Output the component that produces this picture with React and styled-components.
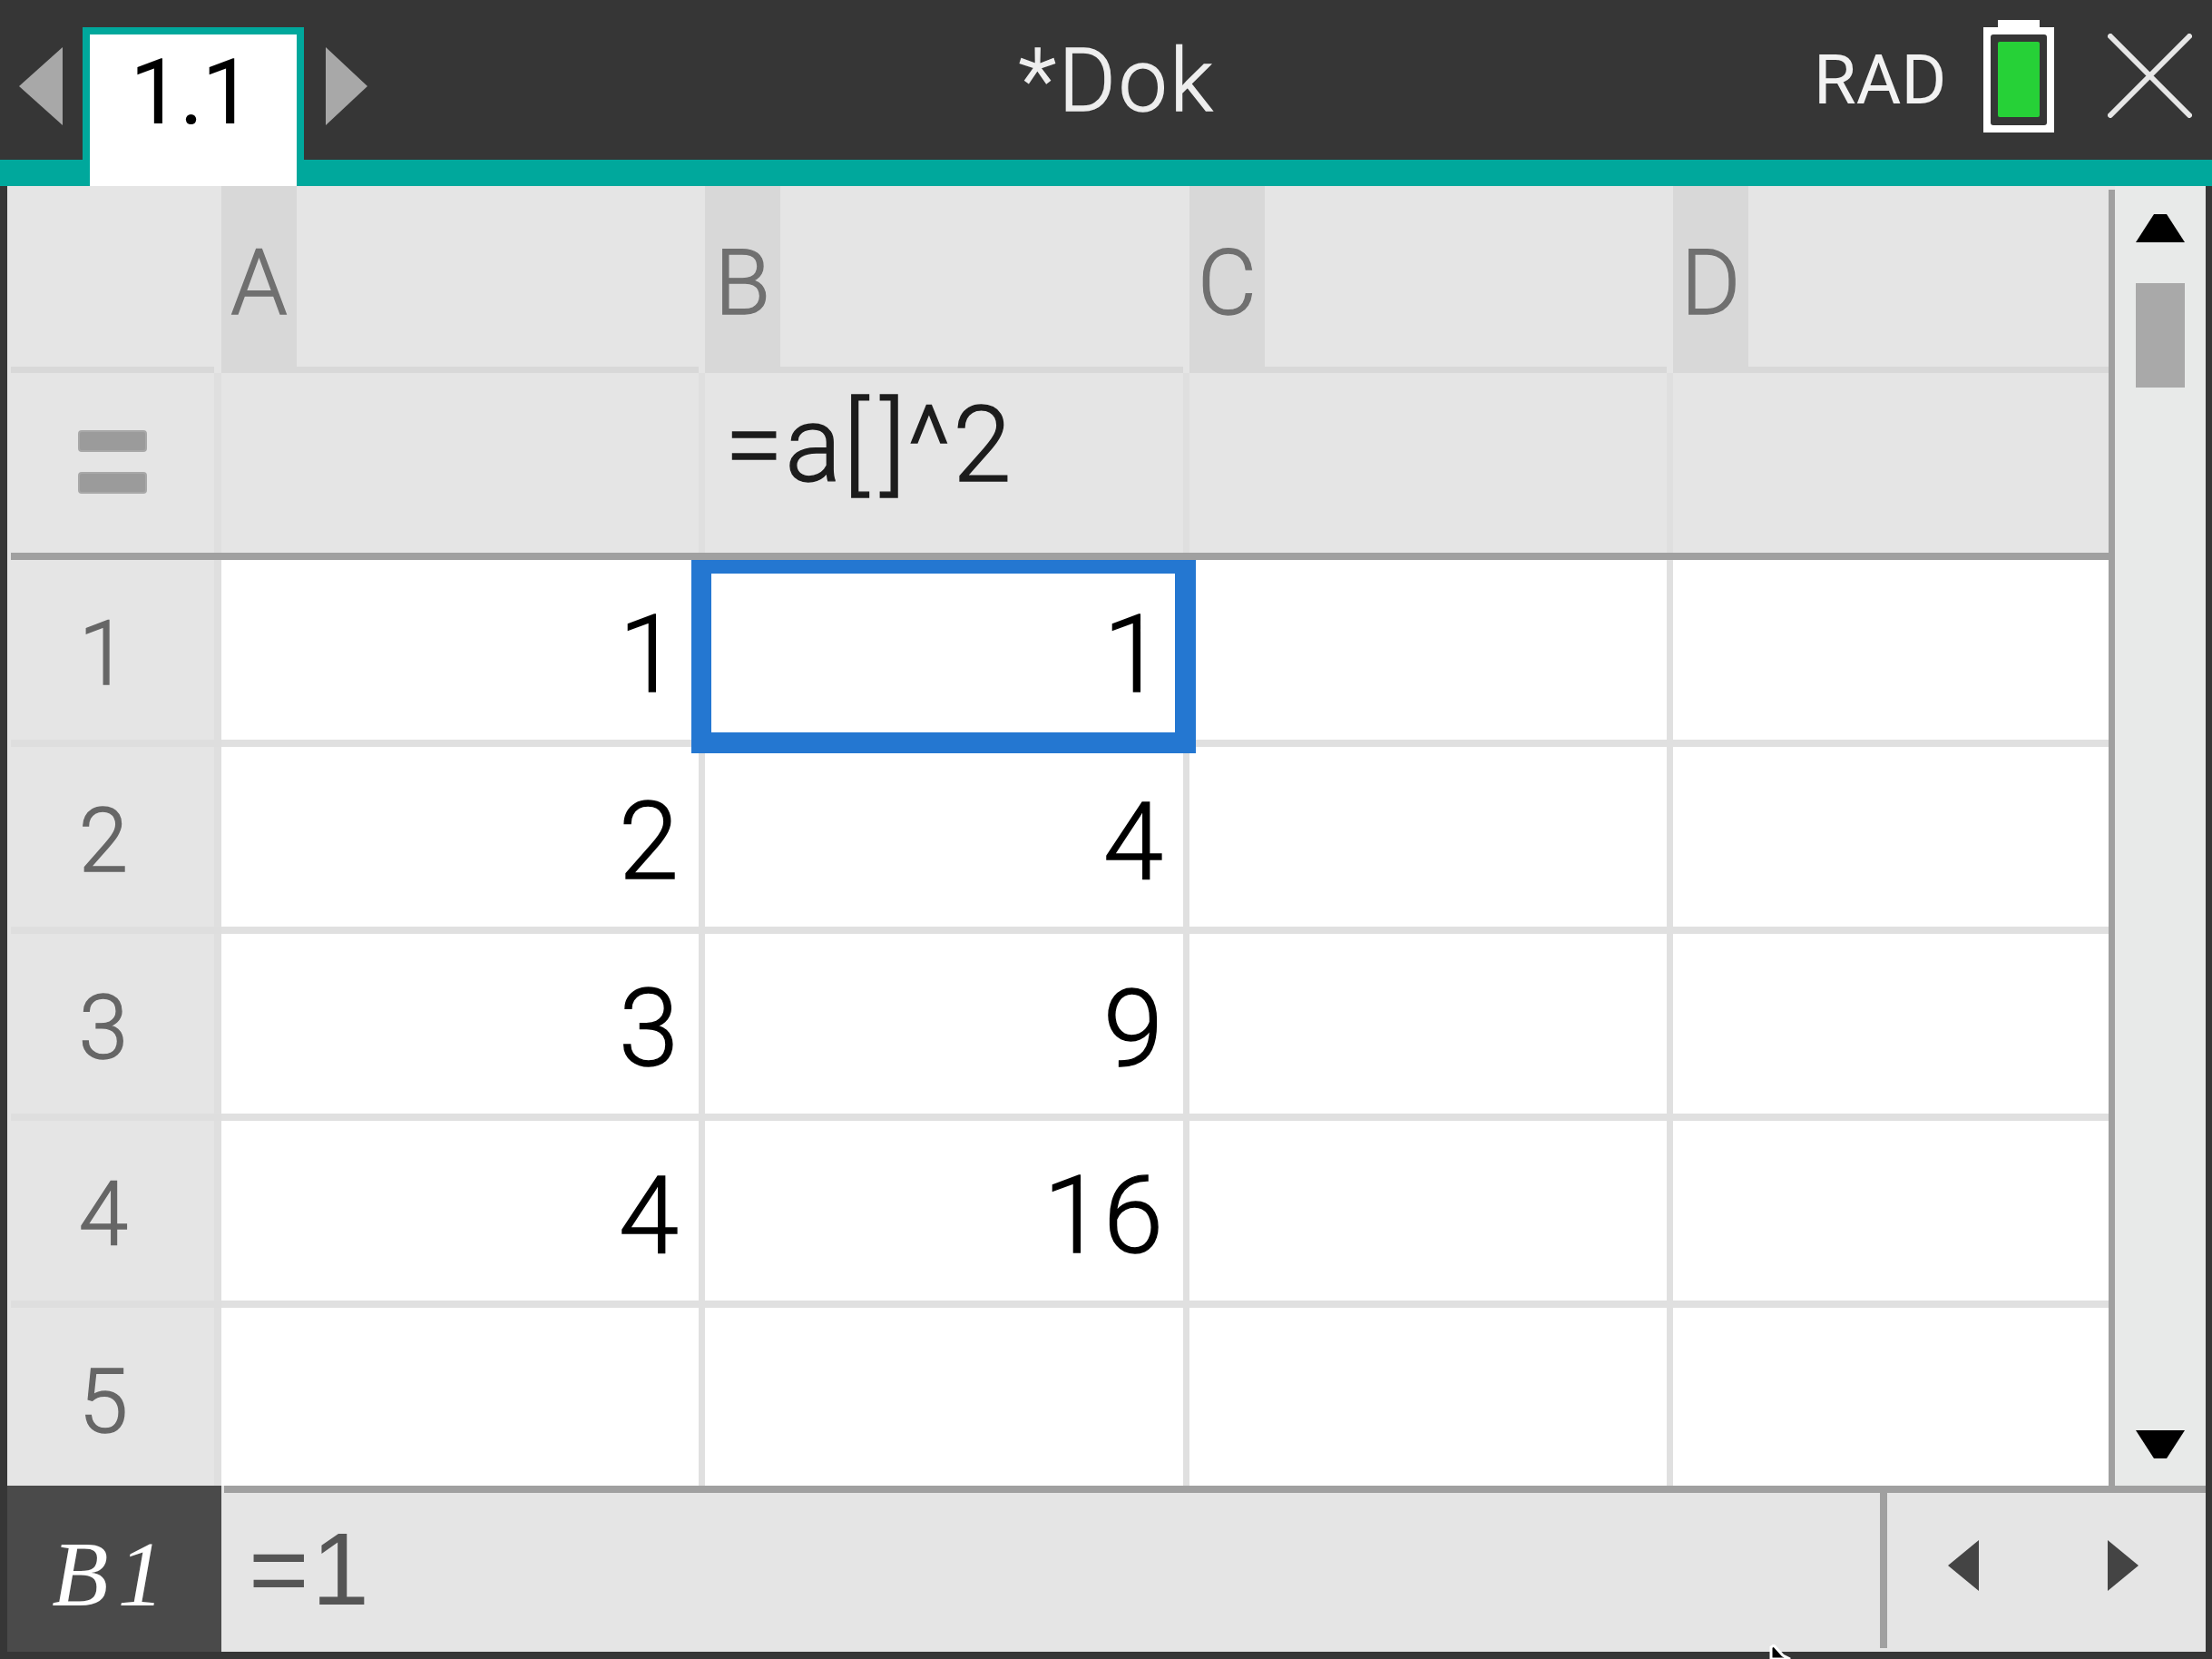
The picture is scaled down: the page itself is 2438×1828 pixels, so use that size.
import React from "react";
import styled, { createGlobalStyle, css } from "styled-components";

const GlobalStyle = createGlobalStyle`
  html, body { margin: 0; padding: 0; background: #363636; }
  * { box-sizing: border-box; }
`;

const mediumStroke = css`
  font-weight: 300;
  -webkit-text-stroke: 1.4px currentColor;
`;

const Page = styled.div`
  position: relative;
  width: 2438px;
  height: 1828px;
  overflow: hidden;
  background: #363636;
  display: flex;
  flex-direction: column;
  font-family: Roboto, "Liberation Sans", sans-serif;
`;

const TitleBar = styled.header`
  flex: none;
  height: 205px;
  display: flex;
  align-items: flex-start;
  border-bottom: 29px solid #00a89c;
  background: #363636;
`;

const NavArrow = styled.svg`
  flex: none;
  display: block;
  margin: ${(p) => p.$margin};
`;

const Tab = styled.div`
  flex: none;
  width: 244px;
  height: 175px;
  margin-top: 30px;
  background: #fff;
  border: 8px solid #00a89c;
  border-bottom: none;
  display: flex;
  justify-content: center;
  font-size: 101px;
  line-height: 1;
  letter-spacing: -2px;
  color: #000;
  padding-top: 13px;
  padding-right: 6px;
`;

const DocTitle = styled.div`
  flex: none;
  width: 876px;
  margin-left: 718px;
  padding-top: 41px;
  ${mediumStroke}
  font-size: 96px;
  line-height: 1;
  letter-spacing: 3px;
  color: #eee;
  white-space: nowrap;
`;

const Mode = styled.div`
  flex: none;
  margin-top: 50px;
  width: 187px;
  font-size: 76px;
  line-height: 1;
  color: #f2f2f2;
`;

const StatusIcon = styled.svg`
  flex: none;
  display: block;
  margin: ${(p) => p.$margin};
`;

const Body = styled.main`
  flex: none;
  height: 1432px;
  padding-left: 8px;
  padding-right: 7px;
  display: flex;
`;

const Sheet = styled.div`
  flex: none;
  width: 2316px;
  display: grid;
  grid-template-columns: 236px 533px 534px 533px 480px;
  grid-template-rows: 206px 206px 206px 206px 206px 206px 196px;
  background: #fff;
`;

const CornerCell = styled.div`
  background: #e5e5e5;
  padding-left: 4px;
  padding-right: 8px;
  display: flex;
`;

const CornerInner = styled.div`
  flex: 1;
  border-bottom: 7px solid #d8d8d8;
`;

const ColHead = styled.div`
  background: #e5e5e5;
  padding-right: ${(p) => (p.$last ? 0 : 7)}px;
  display: flex;
`;

const ColHeadInner = styled.div`
  flex: 1;
  display: flex;
  border-bottom: 7px solid #d8d8d8;
`;

const ColTag = styled.div`
  flex: none;
  width: 83px;
  margin-bottom: -7px;
  background: #d8d8d8;
  color: #707070;
  ${mediumStroke}
  font-size: 100px;
  line-height: 1;
  text-align: center;
  padding-top: 57px;
`;

const FormulaLabel = styled.div`
  background: #e5e5e5;
  padding-left: 4px;
  display: flex;
`;

const FormulaLabelInner = styled.div`
  flex: 1;
  box-shadow: inset 0 -8px 0 #a0a0a0, inset -8px 0 0 #dfdfdf;
  display: flex;
  align-items: center;
  justify-content: center;
  padding-right: 9px;
  padding-bottom: 10px;
`;

const FormulaCell = styled.div`
  background: #e5e5e5;
  box-shadow: inset 0 -8px 0 #a0a0a0, inset ${(p) => (p.$last ? 0 : -7)}px 0 0 #dfdfdf;
  padding-left: 22px;
  padding-top: 21px;
  font-size: 116px;
  ${mediumStroke}
  line-height: 1;
  color: #1c1c1c;
  letter-spacing: 2px;
`;

const BracketOpen = styled.span`
  margin-right: 11px;
`;

const RowNum = styled.div`
  background: #e5e5e5;
  padding-left: 4px;
  display: flex;
`;

const RowNumInner = styled.div`
  flex: 1;
  box-shadow: inset 0 ${(p) => (p.$last ? 0 : -8)}px 0 #dedede, inset -8px 0 0 #dfdfdf;
  color: #666;
  ${mediumStroke}
  font-size: 98px;
  line-height: 1;
  text-align: center;
  padding-top: 55px;
  padding-right: 28px;
`;

const Cell = styled.div`
  position: relative;
  background: #fff;
  box-shadow: inset 0 ${(p) => (p.$lastRow ? 0 : -8)}px 0 #e0e0e0, inset ${(p) => (p.$last ? 0 : -7)}px 0 0 #e0e0e0;
  padding-right: 29px;
  padding-top: 45px;
  text-align: right;
  font-size: 119px;
  ${mediumStroke}
  line-height: 1;
  color: #000;
`;

const Selection = styled.div`
  position: absolute;
  z-index: 1;
  left: -15px;
  right: -7px;
  top: 0;
  bottom: -7px;
  border-style: solid;
  border-color: #2477d1;
  border-width: 15px 23px 23px 22px;
  pointer-events: none;
`;

const ScrollDivider = styled.div`
  flex: none;
  width: 7px;
  background: #a0a0a0;
  border-top: 4px solid #e5e5e5;
`;

const Scrollbar = styled.aside`
  flex: none;
  width: 100px;
  background: #e8eae9;
  display: flex;
  flex-direction: column;
  align-items: center;
  padding-top: 31px;
`;

const ScrollArrow = styled.svg`
  flex: none;
  display: block;
  margin-top: ${(p) => p.$top || 0}px;
`;

const Thumb = styled.div`
  flex: none;
  width: 54px;
  height: 115px;
  margin-top: 45px;
  background: #a9a9a9;
`;

const StatusBar = styled.footer`
  flex: none;
  height: 183px;
  margin-left: 8px;
  margin-right: 7px;
  display: flex;
  background: #e5e5e5;
`;

const CellName = styled.div`
  flex: none;
  width: 236px;
  background: #4a4a4a;
  color: #fff;
  font-family: "Liberation Serif", serif;
  font-style: italic;
  font-size: 102px;
  line-height: 1;
  letter-spacing: 10px;
  text-align: center;
  padding-top: 47px;
  padding-right: 4px;
`;

const EntryBox = styled.div`
  flex: 1;
  min-width: 0;
  margin-left: 3px;
  border-top: 8px solid #a0a0a0;
  display: flex;
`;

const Entry = styled.div`
  flex: 1;
  font-family: "Liberation Sans", sans-serif;
  font-size: 114px;
  line-height: 1;
  letter-spacing: 3px;
  color: #555;
  padding-left: 27px;
  padding-top: 27px;
`;

const EntrySplit = styled.div`
  flex: none;
  width: 8px;
  margin-bottom: 4px;
  background: #a0a0a0;
`;

const CursorNav = styled.div`
  flex: none;
  width: 351px;
  display: flex;
  align-items: flex-start;
  padding-top: 52px;
  padding-left: 67px;
  gap: 142px;
`;

const Pointer = styled.svg`
  position: absolute;
  left: 1950px;
  top: 1812px;
`;

const Triangle = ({ w, h, points, fill, $margin }) => (
  <NavArrow width={w} height={h} viewBox={`0 0 ${w} ${h}`} $margin={$margin}>
    <polygon points={points} fill={fill} />
  </NavArrow>
);

const columns = ["A", "B", "C", "D"];
const rows = [
  ["1", "1"],
  ["2", "4"],
  ["3", "9"],
  ["4", "16"],
  ["", ""],
];

export default function App() {
  return (
    <Page>
      <GlobalStyle />
      <TitleBar>
        <Triangle w={48} h={86} points="48,0 48,86 0,43" fill="#a8a8a8" $margin="52px 22px 0 21px" />
        <Tab>1.1</Tab>
        <Triangle w={46} h={86} points="0,0 0,86 46,43" fill="#a8a8a8" $margin="52px 0 0 24px" />
        <DocTitle>*Dok</DocTitle>
        <Mode>RAD</Mode>
        <StatusIcon width={78} height={124} viewBox="0 0 78 124" $margin="22px 59px 0 0">
          <path d="M16 0h46v8h16v116H0V8h16z" fill="#fff" />
          <rect x="8" y="16" width="62" height="100" rx="3" fill="#363636" />
          <rect x="16" y="24" width="46" height="83" rx="2" fill="#26d137" />
        </StatusIcon>
        <StatusIcon width={93} height={93} viewBox="0 0 93 93" $margin="37px 0 0 0">
          <path d="M3 3L90 90M90 3L3 90" stroke="#e6e6e6" strokeWidth="6" strokeLinecap="round" />
        </StatusIcon>
      </TitleBar>
      <Body>
        <Sheet>
          <CornerCell>
            <CornerInner />
          </CornerCell>
          {columns.map((c, i) => (
            <ColHead key={c} $last={i === 3}>
              <ColHeadInner>
                <ColTag>{c}</ColTag>
              </ColHeadInner>
            </ColHead>
          ))}
          <FormulaLabel>
            <FormulaLabelInner>
              <svg width="76" height="70" viewBox="0 0 76 70">
                <rect x="1" y="1" width="74" height="22" rx="3" fill="#9b9b9b" stroke="#a8a8a8" strokeWidth="2" />
                <rect x="1" y="47" width="74" height="22" rx="3" fill="#9b9b9b" stroke="#a8a8a8" strokeWidth="2" />
              </svg>
            </FormulaLabelInner>
          </FormulaLabel>
          <FormulaCell />
          <FormulaCell>
            =a<BracketOpen>[</BracketOpen>]^2
          </FormulaCell>
          <FormulaCell />
          <FormulaCell $last />
          {rows.map((r, i) => {
            const lastRow = i === rows.length - 1;
            return (
              <React.Fragment key={i}>
                <RowNum>
                  <RowNumInner $last={lastRow}>{i + 1}</RowNumInner>
                </RowNum>
                <Cell $lastRow={lastRow}>{r[0]}</Cell>
                <Cell $lastRow={lastRow}>
                  {r[1]}
                  {i === 0 && <Selection />}
                </Cell>
                <Cell $lastRow={lastRow} />
                <Cell $lastRow={lastRow} $last />
              </React.Fragment>
            );
          })}
        </Sheet>
        <ScrollDivider />
        <Scrollbar>
          <ScrollArrow width={54} height={31} viewBox="0 0 54 31">
            <polygon points="20,0 34,0 54,31 0,31" fill="#000" />
          </ScrollArrow>
          <Thumb />
          <ScrollArrow width={54} height={31} viewBox="0 0 54 31" $top={1149}>
            <polygon points="0,0 54,0 34,31 20,31" fill="#000" />
          </ScrollArrow>
        </Scrollbar>
      </Body>
      <StatusBar>
        <CellName>B1</CellName>
        <EntryBox>
          <Entry>=1</Entry>
          <EntrySplit />
          <CursorNav>
            <svg width="34" height="56" viewBox="0 0 34 56">
              <polygon points="34,0 34,56 0,28" fill="#444" />
            </svg>
            <svg width="34" height="56" viewBox="0 0 34 56">
              <polygon points="0,0 0,56 34,28" fill="#444" />
            </svg>
          </CursorNav>
        </EntryBox>
      </StatusBar>
      <Pointer width="30" height="16" viewBox="0 0 30 16">
        <path d="M2 16V3l3-2 10 11 8 4z" fill="#000" stroke="#fff" strokeWidth="3" />
      </Pointer>
    </Page>
  );
}
